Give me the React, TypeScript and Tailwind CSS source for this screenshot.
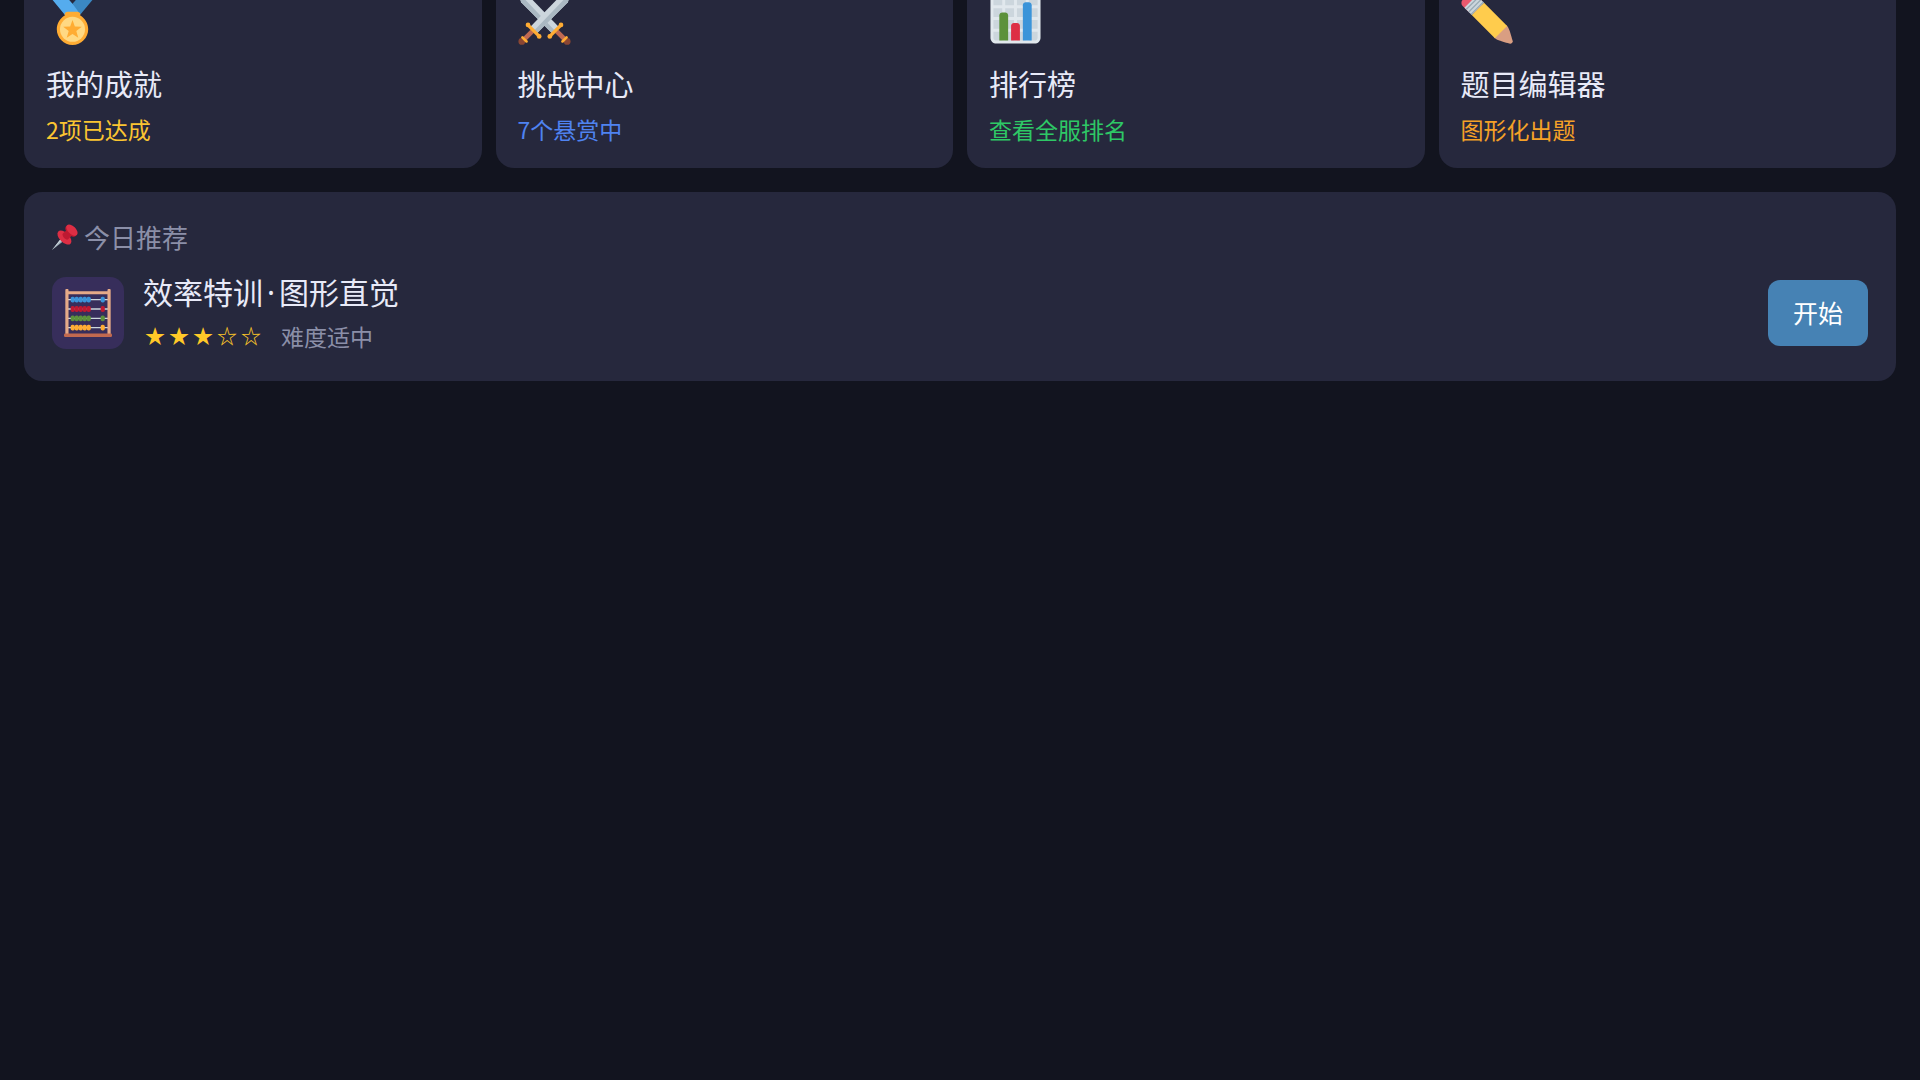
import type { ReactNode } from "react";

type MenuCard = {
  title: string;
  note: string;
  noteClass: string;
  icon: ReactNode;
};

function MedalIcon() {
  return (
    <svg viewBox="0 0 36 36" className="size-[53px]" aria-hidden="true">
      <path fill="#55ACEE" d="M18 8l-7-8H0l14 17 11.521-4.75z" />
      <path fill="#3B88C3" d="M25 0l-7 8 5.39 7.312 1.227-1.489L36 0z" />
      <path fill="#FFAC33" d="M23.205 16.026c.08-.217.131-.448.131-.693 0-1.104-.896-2-2-2h-6.667c-1.104 0-2 .896-2 2 0 .245.05.476.131.693-3.258 1.826-5.464 5.307-5.464 9.307C7.335 31.224 12.111 36 18.002 36s10.667-4.776 10.667-10.667c0-4-2.206-7.481-5.464-9.307z" />
      <circle cx="18" cy="25.333" r="8.5" fill="#FFD983" />
      <path fill="#FFAC33" d="M18 19l1.6 4.4 4.7.2-3.7 2.9 1.3 4.6-3.9-2.6-3.9 2.6 1.3-4.6-3.7-2.9 4.7-.2z" />
    </svg>
  );
}

function Sword() {
  return (
    <>
      <path fill="#CCD6DD" d="M8.6 23.4L29 2.4 35.7.4l-1.8 6.6L13.1 27.9z" />
      <path fill="#AAB8C2" d="M11.2 26L35.7.4l-1.8 6.6L13.1 27.9z" />
      <path stroke="#BF6952" strokeWidth="3.2" d="M9.8 26.6L4.2 32.2" />
      <circle cx="2.6" cy="33.6" r="2.3" fill="#8A4633" />
      <path stroke="#FFAC33" strokeWidth="1.8" strokeLinecap="round" d="M3 30.8l2.8 2.8" />
      <path stroke="#FFAC33" strokeWidth="2.2" d="M7 22.6l7.3 7.4" />
      <circle cx="6.8" cy="22.4" r="1.6" fill="#FFAC33" />
      <circle cx="14.4" cy="30.2" r="1.6" fill="#FFAC33" />
    </>
  );
}

function SwordsIcon() {
  return (
    <svg viewBox="0 0 36 36" className="size-[53px]" fill="none" aria-hidden="true">
      <g transform="matrix(-1 0 0 1 36 0)">
        <Sword />
      </g>
      <Sword />
    </svg>
  );
}

function ChartIcon() {
  return (
    <svg viewBox="0 0 36 36" className="size-[53px]" aria-hidden="true">
      <rect x="2" y="2" width="32" height="32" rx="3" fill="#CCD6DD" />
      <path fill="#E1E8ED" d="M31 1H5C2.791 1 1 2.791 1 5v26c0 2.209 1.791 4 4 4h26c2.209 0 4-1.791 4-4V5c0-2.209-1.791-4-4-4zm0 2c1.103 0 2 .897 2 2v4h-6V3h4zm-4 16h6v6h-6v-6zm0-2v-6h6v6h-6zM25 3v6h-6V3h6zm-6 8h6v6h-6v-6zm0 8h6v6h-6v-6zM17 3v6h-6V3h6zm-6 8h6v6h-6v-6zm0 8h6v6h-6v-6zM3 5c0-1.103.897-2 2-2h4v6H3V5zm0 6h6v6H3v-6zm0 8h6v6H3v-6zm2 14c-1.103 0-2-.897-2-2v-4h6v6H5zm6 0v-6h6v6h-6zm8 0v-6h6v6h-6zm12 0h-4v-6h6v4c0 1.103-.897 2-2 2z" />
      <path fill="#5C913B" d="M13 33H7V16c0-1.104.896-2 2-2h2c1.104 0 2 .896 2 2v17z" />
      <path fill="#3B94D9" d="M29 33h-6V9c0-1.104.896-2 2-2h2c1.104 0 2 .896 2 2v24z" />
      <path fill="#DD2E44" d="M21 33h-6V23c0-1.104.896-2 2-2h2c1.104 0 2 .896 2 2v10z" />
    </svg>
  );
}

function PencilIcon() {
  return (
    <svg viewBox="0 0 36 36" className="size-[53px]" aria-hidden="true">
      <path fill="#D99E82" d="M35.222 33.598c-.647-2.101-1.705-6.059-2.325-7.566-.501-1.216-.969-2.438-1.544-3.014-.575-.575-1.553-.53-2.143.058 0 0-2.469 1.675-3.354 2.783-1.108.882-2.785 3.357-2.785 3.357-.59.59-.635 1.567-.06 2.143.576.575 1.798 1.043 3.015 1.544 1.506.62 5.465 1.676 7.566 2.325.359.11 1.74-1.271 1.63-1.63z" />
      <path fill="#EA596E" d="M13.643 5.308c1.151 1.151 1.151 3.016 0 4.167l-4.167 4.168c-1.151 1.15-3.018 1.15-4.167 0L1.141 9.475c-1.15-1.151-1.15-3.016 0-4.167l4.167-4.167c1.15-1.151 3.016-1.151 4.167 0l4.168 4.167z" />
      <path fill="#FFCC4D" d="M31.353 23.018l-4.17 4.17-4.163 4.165L7.292 15.626l8.335-8.334 15.726 15.726z" />
      <path fill="#CCD6DD" d="M2.312 10.645l8.334-8.334 4.98 4.98-8.334 8.335z" />
      <path stroke="#99AAB5" strokeWidth=".9" d="M3.5 11.9l8.4-8.4M5.2 13.6l8.4-8.4M6.8 15.2l8.4-8.4" />
    </svg>
  );
}

function PinIcon() {
  return (
    <svg viewBox="0 0 36 36" className="size-[26px]" aria-hidden="true">
      <path fill="#99AAB5" d="M0 36l12.2-15.6 3.4 3.4z" />
      <path fill="#CCD6DD" d="M0 36l12.2-15.6 1.7 1.7z" />
      <ellipse cx="17.2" cy="18.8" rx="12" ry="6.6" fill="#DD2E44" transform="rotate(45 17.2 18.8)" />
      <path fill="#BE1931" d="M14.5 14L21 7.5l7.5 7.5-6.5 6.5c-3 1-7.5-3-7.5-7.5z" />
      <ellipse cx="26.2" cy="9.8" rx="9.4" ry="5.6" fill="#BE1931" transform="rotate(45 26.2 9.8)" />
      <ellipse cx="27.6" cy="8.4" rx="9.6" ry="5.4" fill="#DD2E44" transform="rotate(45 27.6 8.4)" />
    </svg>
  );
}

const rods = [
  { y: 8, color: "#3B94D9" },
  { y: 15, color: "#BE1931" },
  { y: 22, color: "#5C913B" },
  { y: 29, color: "#FFAC33" },
];

const beads = [5, 8, 11, 14, 17, 27.5];

function AbacusIcon() {
  return (
    <svg viewBox="0 0 36 36" className="size-12" aria-hidden="true">
      {rods.map(rod => (
        <g key={rod.y}>
          <path stroke="#CCD6DD" d={`M3 ${rod.y}h30`} />
          {beads.map(x => (
            <rect key={x} x={x} y={rod.y - 2.2} width="3.1" height="4.4" rx="1.3" fill={rod.color} />
          ))}
        </g>
      ))}
      <path fill="#E6AA88" d="M1 1a1 1 0 0 1 2.4 0v.6h29.2V1A1 1 0 0 1 35 1v33h-2.4V4H3.4v30H1z" />
      <rect y="33.4" width="36" height="2.6" rx="1" fill="#C1694F" />
    </svg>
  );
}

const cards: MenuCard[] = [
  { title: "我的成就", note: "2项已达成", noteClass: "text-[#fbc531]", icon: <MedalIcon /> },
  { title: "挑战中心", note: "7个悬赏中", noteClass: "text-[#4f83f1]", icon: <SwordsIcon /> },
  { title: "排行榜", note: "查看全服排名", noteClass: "text-[#2ec866]", icon: <ChartIcon /> },
  { title: "题目编辑器", note: "图形化出题", noteClass: "text-[#f5a127]", icon: <PencilIcon /> },
];

const stars = ["★", "★", "★", "☆", "☆"];

export default function App() {
  return (
    <div className="min-h-screen overflow-hidden bg-[#12141f] px-6 font-['Noto_Sans_CJK_SC',sans-serif] text-[#e8eaf8]">
      <main className="-mt-8 flex flex-col gap-6">
        <nav className="grid grid-cols-4 gap-[14px]">
          {cards.map(card => (
            <a key={card.title} href="#" className="flex flex-col rounded-[18px] bg-[#26283d] px-[22px] pt-6 pb-[22px]">
              {card.icon}
              <span className="mt-5 text-[29px] leading-9">{card.title}</span>
              <span className={`mt-[11px] text-[23px] leading-[34px] ${card.noteClass}`}>{card.note}</span>
            </a>
          ))}
        </nav>

        <section className="rounded-[18px] bg-[#26283d] px-7 pt-[27px] pb-7">
          <h2 className="flex items-center gap-[6px] text-[26px] leading-9 text-[#8b8fa8]">
            <PinIcon />
            今日推荐
          </h2>
          <div className="mt-[18px] flex items-center gap-[19px]">
            <div className="flex size-[72px] items-center justify-center rounded-[14px] bg-[#372e5b]">
              <AbacusIcon />
            </div>
            <div className="flex-1">
              <h3 className="text-[30px] leading-9">
                效率特训<span className="mx-1 font-['Noto_Sans',sans-serif]">·</span>图形直觉
              </h3>
              <div className="mt-2 flex items-center gap-5 text-[23px] leading-[34px]">
                <div className="flex gap-1 pl-[2px] text-xl leading-[34px] text-[#ffc928]">
                  {stars.map((star, i) => (
                    <span key={i}>{star}</span>
                  ))}
                </div>
                <span className="text-[#8b8fa8]">难度适中</span>
              </div>
            </div>
            <button type="button" className="rounded-xl bg-[#4682b4] px-[25px] pt-[15px] pb-[17px] text-[25px] leading-[34px] text-white">
              开始
            </button>
          </div>
        </section>
      </main>
    </div>
  );
}
